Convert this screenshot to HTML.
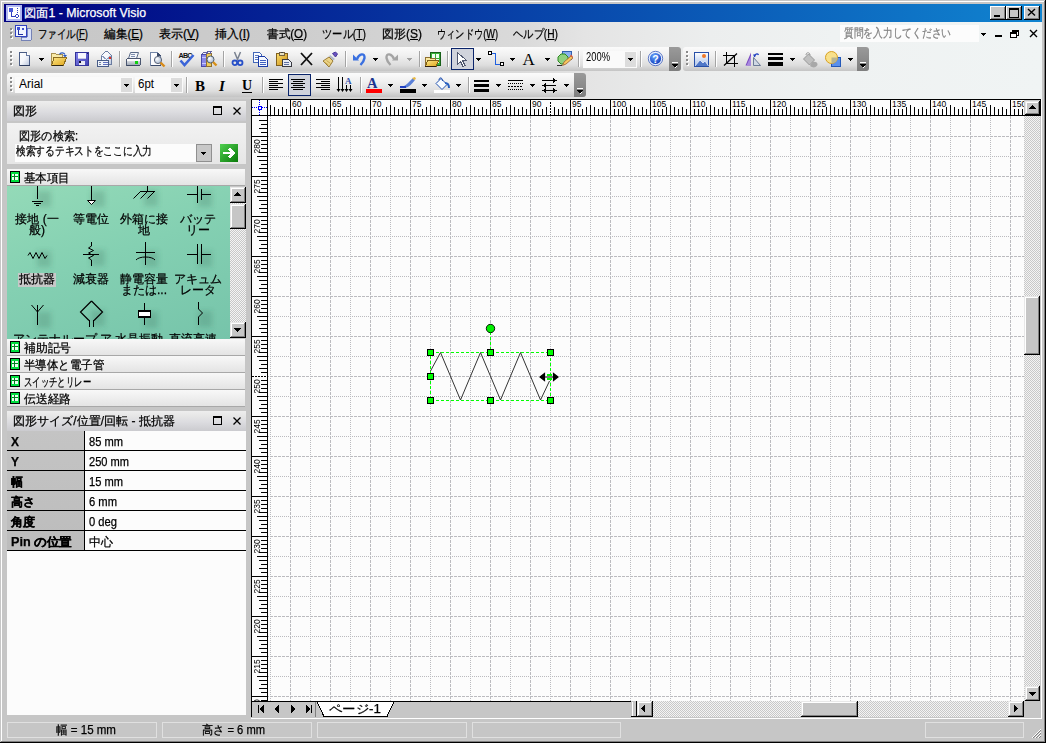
<!DOCTYPE html><html><head><meta charset="utf-8"><style>
*{margin:0;padding:0;box-sizing:border-box}
html,body{width:1046px;height:743px;overflow:hidden;background:#c6c6c6;font-family:"Liberation Sans",sans-serif;font-size:12px;color:#000}
.a{position:absolute}
.t{position:absolute;white-space:nowrap;line-height:12px;font-size:12px;transform-origin:0 0;z-index:5;-webkit-text-stroke:0.25px currentColor}
.clip{position:absolute;overflow:hidden;z-index:5}
svg{position:absolute;left:0;top:0;z-index:3}
u{text-decoration:underline}
</style></head><body>
<div class="a" style="left:1px;top:1px;width:1043px;height:1px;background:#fff"></div>
<div class="a" style="left:1px;top:1px;width:1px;height:740px;background:#fff"></div>
<div class="a" style="left:1044px;top:1px;width:1px;height:741px;background:#808080"></div>
<div class="a" style="left:1px;top:741px;width:1044px;height:1px;background:#808080"></div>
<div class="a" style="left:1045px;top:0px;width:1px;height:743px;background:#000"></div>
<div class="a" style="left:0px;top:742px;width:1046px;height:1px;background:#000"></div>
<div class="a" style="left:4px;top:4px;width:1038px;height:18px;background:linear-gradient(to right,#000080,#1084d0)"></div>
<div class="a" style="left:4px;top:22px;width:1038px;height:77px;background:linear-gradient(to right,#c6c6c6 0%,#cdcdcd 27%,#dadada 50%,#e4e4e4 56%,#eceeee 68%,#eff2f2 80%,#f0f4f4 100%)"></div>
<div class="a" style="left:7px;top:47px;width:674px;height:24px;border-radius:3px;background:linear-gradient(to bottom,#fbfbfb 0%,#f0f0f0 35%,#dedede 75%,#c4c4c4 100%)"></div>
<div class="a" style="left:669px;top:47px;width:12px;height:24px;border-radius:0 3px 3px 0;background:linear-gradient(to bottom,#9a9a9a,#7e7e7e)"></div>
<div class="a" style="left:683px;top:47px;width:186px;height:24px;border-radius:3px;background:linear-gradient(to bottom,#fbfbfb 0%,#f0f0f0 35%,#dedede 75%,#c4c4c4 100%)"></div>
<div class="a" style="left:857px;top:47px;width:12px;height:24px;border-radius:0 3px 3px 0;background:linear-gradient(to bottom,#9a9a9a,#7e7e7e)"></div>
<div class="a" style="left:7px;top:73px;width:579px;height:24px;border-radius:3px;background:linear-gradient(to bottom,#fbfbfb 0%,#f0f0f0 35%,#dedede 75%,#c4c4c4 100%)"></div>
<div class="a" style="left:574px;top:73px;width:12px;height:24px;border-radius:0 3px 3px 0;background:linear-gradient(to bottom,#9a9a9a,#7e7e7e)"></div>
<div class="t" id="t0" style="left:38px;top:28px;transform:scaleX(0.7893);">ファイル(<u>F</u>)</div>
<div class="t" id="t1" style="left:104px;top:28px;transform:scaleX(0.9746);">編集(<u>E</u>)</div>
<div class="t" id="t2" style="left:159px;top:28px;transform:scaleX(0.9996);">表示(<u>V</u>)</div>
<div class="t" id="t3" style="left:215px;top:28px;transform:scaleX(0.9903);">挿入(<u>I</u>)</div>
<div class="t" id="t4" style="left:267px;top:28px;transform:scaleX(0.9675);">書式(<u>O</u>)</div>
<div class="t" id="t5" style="left:322px;top:28px;transform:scaleX(0.8570);">ツール(<u>T</u>)</div>
<div class="t" id="t6" style="left:382px;top:28px;transform:scaleX(0.9996);">図形(<u>S</u>)</div>
<div class="t" id="t7" style="left:437px;top:28px;transform:scaleX(0.7690);">ウィンドウ(<u>W</u>)</div>
<div class="t" id="t8" style="left:513px;top:28px;transform:scaleX(0.8543);">ヘルプ(<u>H</u>)</div>
<div class="a" style="left:840px;top:25px;width:139px;height:17px;background:#fcfcfc"></div>
<div class="t" id="t9" style="left:844px;top:27px;transform:scaleX(0.8106);color:#808080">質問を入力してください</div>
<div class="a" style="left:451px;top:48px;width:23px;height:22px;background:#d0d3dc;border:1px solid #0a246a"></div>
<div class="a" style="left:583px;top:51px;width:54px;height:17px;background:#fafafa"></div>
<div class="a" style="left:625px;top:52px;width:11px;height:15px;background:#dcdcdc"></div>
<div class="t" id="t10" style="left:586px;top:51px;transform:scaleX(0.7817);-webkit-text-stroke:0">200%</div>
<div class="a" style="left:15px;top:77px;width:118px;height:16px;background:#fafafa"></div>
<div class="a" style="left:121px;top:78px;width:11px;height:14px;background:#dcdcdc"></div>
<div class="t" id="t11" style="left:19px;top:78px;transform:scaleX(0.9993);-webkit-text-stroke:0">Arial</div>
<div class="a" style="left:135px;top:77px;width:48px;height:16px;background:#fafafa"></div>
<div class="a" style="left:171px;top:78px;width:11px;height:14px;background:#dcdcdc"></div>
<div class="t" id="t12" style="left:138px;top:78px;transform:scaleX(0.9588);-webkit-text-stroke:0">6pt</div>
<div class="a" style="left:288px;top:74px;width:23px;height:22px;background:#d0d3dc;border:1px solid #0a246a"></div>
<div class="a" style="left:7px;top:101px;width:239px;height:20px;background:linear-gradient(to bottom,#eeeeee 0%,#e6e6e6 25%,#dcdce0 55%,#cbcbcf 100%)"></div>
<div class="t" id="t13" style="left:13px;top:105px;transform:scaleX(1.0000);">図形</div>
<div class="a" style="left:7px;top:123px;width:239px;height:41px;background:linear-gradient(to bottom,#f2f2f2,#e6e6e6)"></div>
<div class="t" id="t14" style="left:19px;top:130px;transform:scaleX(0.9314);">図形の検索:</div>
<div class="a" style="left:15px;top:144px;width:181px;height:18px;background:#fcfcfc"></div>
<div class="t" id="t15" style="left:16px;top:145px;transform:scaleX(0.8095);">検索するテキストをここに入力</div>
<div class="a" style="left:196px;top:144px;width:16px;height:18px;background:#c8c8c8;border:1px solid #909090"></div>
<div class="a" style="left:220px;top:144px;width:18px;height:18px;background:linear-gradient(135deg,#50d050,#0a7a0a)"></div>
<div class="a" style="left:7px;top:169px;width:238px;height:17px;background:linear-gradient(to bottom,#f8f8f8,#e4e4e4);border-bottom:1px solid #a8a8a8"></div>
<div class="t" id="t16" style="left:24px;top:172px;transform:scaleX(0.9583);">基本項目</div>
<div class="a" style="left:7px;top:186px;width:223px;height:153px;background:linear-gradient(160deg,#94dab8 0%,#84d0b2 45%,#76c4aa 100%)"></div>
<div class="a" style="left:230px;top:187px;width:16px;height:151px;background:repeating-conic-gradient(#f4f4f4 0 25%,#c8c8c8 0 50%) 0 0/2px 2px"></div>
<div class="clip" style="left:7px;top:186px;width:223px;height:153px">
<div class="t" style="left:0px;top:27px;width:60px;text-align:center">接地 (一</div>
<div class="t" style="left:0px;top:38px;width:60px;text-align:center">般)</div>
<div class="t" style="left:54px;top:27px;width:60px;text-align:center">等電位</div>
<div class="t" style="left:107px;top:27px;width:60px;text-align:center">外箱に接</div>
<div class="t" style="left:107px;top:38px;width:60px;text-align:center">地</div>
<div class="t" style="left:161px;top:27px;width:60px;text-align:center">バッテ</div>
<div class="t" style="left:161px;top:38px;width:60px;text-align:center">リー</div>
<div class="a" style="left:11px;top:87px;width:38px;height:14px;background:#c8c8c8"></div>
<div class="t" style="left:0px;top:87px;width:60px;text-align:center">抵抗器</div>
<div class="t" style="left:54px;top:87px;width:60px;text-align:center">減衰器</div>
<div class="t" style="left:107px;top:87px;width:60px;text-align:center">静電容量</div>
<div class="t" style="left:107px;top:98px;width:60px;text-align:center">または...</div>
<div class="t" style="left:161px;top:87px;width:60px;text-align:center">アキュム</div>
<div class="t" style="left:161px;top:98px;width:60px;text-align:center">レータ</div>
<div class="t" style="left:0px;top:147px;width:60px;text-align:center">アンテナ</div>
<div class="t" style="left:54px;top:147px;width:60px;text-align:center">ループ ア...</div>
<div class="t" style="left:107px;top:147px;width:60px;text-align:center">水晶振動...</div>
<div class="t" style="left:161px;top:147px;width:60px;text-align:center">直流高速...</div>
</div>
<div class="a" style="left:7px;top:339px;width:238px;height:17px;background:linear-gradient(to bottom,#f8f8f8,#e4e4e4);border-bottom:1px solid #a8a8a8"></div>
<div class="t" id="t17" style="left:24px;top:342px;transform:scaleX(0.9792);">補助記号</div>
<div class="a" style="left:7px;top:356px;width:238px;height:17px;background:linear-gradient(to bottom,#f8f8f8,#e4e4e4);border-bottom:1px solid #a8a8a8"></div>
<div class="t" id="t18" style="left:24px;top:359px;transform:scaleX(0.9524);">半導体と電子管</div>
<div class="a" style="left:7px;top:373px;width:238px;height:17px;background:linear-gradient(to bottom,#f8f8f8,#e4e4e4);border-bottom:1px solid #a8a8a8"></div>
<div class="t" id="t19" style="left:24px;top:376px;transform:scaleX(0.6979);">スイッチとリレー</div>
<div class="a" style="left:7px;top:390px;width:238px;height:17px;background:linear-gradient(to bottom,#f8f8f8,#e4e4e4);border-bottom:1px solid #a8a8a8"></div>
<div class="t" id="t20" style="left:24px;top:393px;transform:scaleX(0.9792);">伝送経路</div>
<div class="a" style="left:7px;top:411px;width:239px;height:20px;background:linear-gradient(to bottom,#eeeeee 0%,#e6e6e6 25%,#dcdce0 55%,#cbcbcf 100%)"></div>
<div class="t" id="t21" style="left:13px;top:415px;transform:scaleX(1.0041);">図形サイズ/位置/回転 - 抵抗器</div>
<div class="a" style="left:7px;top:431px;width:239px;height:284px;background:#fcfcfc"></div>
<div class="a" style="left:7px;top:431px;width:77px;height:120px;background:linear-gradient(to bottom,#c4c4c4,#bcbcbc)"></div>
<div class="a" style="left:7px;top:450px;width:239px;height:1px;background:#000"></div>
<div class="a" style="left:7px;top:470px;width:239px;height:1px;background:#000"></div>
<div class="a" style="left:7px;top:490px;width:239px;height:1px;background:#000"></div>
<div class="a" style="left:7px;top:510px;width:239px;height:1px;background:#000"></div>
<div class="a" style="left:7px;top:530px;width:239px;height:1px;background:#000"></div>
<div class="a" style="left:7px;top:550px;width:239px;height:1px;background:#000"></div>
<div class="a" style="left:84px;top:431px;width:1px;height:120px;background:#000"></div>
<div class="t" id="t22" style="left:11px;top:436px;transform:scaleX(0.9981);font-weight:bold">X</div>
<div class="t" id="t23" style="left:89px;top:436px;transform:scaleX(0.9267);">85 mm</div>
<div class="t" id="t24" style="left:11px;top:456px;transform:scaleX(0.9981);font-weight:bold">Y</div>
<div class="t" id="t25" style="left:89px;top:456px;transform:scaleX(0.9225);">250 mm</div>
<div class="t" id="t26" style="left:11px;top:476px;transform:scaleX(1.0000);font-weight:bold">幅</div>
<div class="t" id="t27" style="left:89px;top:476px;transform:scaleX(0.9267);">15 mm</div>
<div class="t" id="t28" style="left:11px;top:496px;transform:scaleX(1.0000);font-weight:bold">高さ</div>
<div class="t" id="t29" style="left:89px;top:496px;transform:scaleX(0.9333);">6 mm</div>
<div class="t" id="t30" style="left:11px;top:516px;transform:scaleX(1.0000);font-weight:bold">角度</div>
<div class="t" id="t31" style="left:89px;top:516px;transform:scaleX(0.9324);">0 deg</div>
<div class="t" id="t32" style="left:11px;top:536px;transform:scaleX(1.0514);font-weight:bold">Pin の位置</div>
<div class="t" id="t33" style="left:89px;top:536px;transform:scaleX(1.0000);">中心</div>
<div class="a" style="left:268px;top:116px;width:756px;height:585px;background:#fcfcfc"></div>
<div class="a" style="left:1024px;top:116px;width:16px;height:585px;background:repeating-conic-gradient(#f4f4f4 0 25%,#c8c8c8 0 50%) 0 0/2px 2px"></div>
<div class="a" style="left:251px;top:702px;width:790px;height:16px;background:#c6c6c6"></div>
<div class="a" style="left:251px;top:718px;width:791px;height:1px;background:#fff"></div>
<div class="a" style="left:1041px;top:99px;width:1px;height:620px;background:#fff"></div>
<div class="a" style="left:653px;top:701px;width:371px;height:16px;background:repeating-conic-gradient(#f4f4f4 0 25%,#c8c8c8 0 50%) 0 0/2px 2px"></div>
<div class="t" id="t34" style="left:329px;top:703px;transform:scaleX(1.1142);">ページ-1</div>
<div class="a" style="left:7px;top:722px;width:150px;height:16px;border:1px solid #e0e0e0"></div>
<div class="a" style="left:162px;top:722px;width:150px;height:16px;border:1px solid #e0e0e0"></div>
<div class="a" style="left:317px;top:722px;width:150px;height:16px;border:1px solid #e0e0e0"></div>
<div class="a" style="left:472px;top:722px;width:149px;height:16px;border:1px solid #e0e0e0"></div>
<div class="a" style="left:925px;top:722px;width:99px;height:16px;border:1px solid #e0e0e0"></div>
<div class="t" id="t35" style="left:56px;top:724px;transform:scaleX(0.9622);">幅 = 15 mm</div>
<div class="t" id="t36" style="left:202px;top:724px;transform:scaleX(0.9307);">高さ = 6 mm</div>
<svg width="1046" height="743" viewBox="0 0 1046 743" shape-rendering="crispEdges"><defs>
<linearGradient id="gPage" x1="0" y1="0" x2="1" y2="1"><stop offset="0" stop-color="#ffffff"/><stop offset=".5" stop-color="#f4f6fb"/><stop offset="1" stop-color="#b8c4dc"/></linearGradient>
<linearGradient id="gFold" x1="0" y1="0" x2="0" y2="1"><stop offset="0" stop-color="#fbe9a0"/><stop offset="1" stop-color="#e8b838"/></linearGradient>
<linearGradient id="gFoldF" x1="0" y1="0" x2="1" y2="1"><stop offset="0" stop-color="#fce88a"/><stop offset="1" stop-color="#e0a418"/></linearGradient>
<linearGradient id="gSave" x1="0" y1="0" x2="1" y2="1"><stop offset="0" stop-color="#8888ee"/><stop offset="1" stop-color="#3c3cb0"/></linearGradient>
<linearGradient id="gBlue" x1="0" y1="0" x2="1" y2="1"><stop offset="0" stop-color="#6aa0f8"/><stop offset="1" stop-color="#1840b8"/></linearGradient>
<linearGradient id="gGrey" x1="0" y1="0" x2="0" y2="1"><stop offset="0" stop-color="#fafafa"/><stop offset="1" stop-color="#9aa4b4"/></linearGradient>
<radialGradient id="gGlass" cx=".35" cy=".35" r=".7"><stop offset="0" stop-color="#ffffff"/><stop offset="1" stop-color="#a8b8d0"/></radialGradient>
<radialGradient id="gHelp" cx=".4" cy=".3" r=".8"><stop offset="0" stop-color="#6aa8ff"/><stop offset="1" stop-color="#0834b8"/></radialGradient>
<linearGradient id="gGreenBtn" x1="0" y1="0" x2="1" y2="1"><stop offset="0" stop-color="#50d050"/><stop offset="1" stop-color="#0a7a0a"/></linearGradient>
<linearGradient id="gPaste" x1="0" y1="0" x2="1" y2="1"><stop offset="0" stop-color="#fce070"/><stop offset="1" stop-color="#c88a10"/></linearGradient>
<linearGradient id="gPic" x1="0" y1="0" x2="0" y2="1"><stop offset="0" stop-color="#ffffff"/><stop offset="1" stop-color="#a8c0e8"/></linearGradient>
</defs><rect x="672" y="62" width="6" height="1" fill="#fff"/><path d="M672 64h6v1h-1v1h-1v1h-2v-1h-1v-1h-1z" fill="#000"/><path d="M676 66h1v1h-1v1h-1v-1h1z" fill="#fff"/><rect x="860" y="62" width="6" height="1" fill="#fff"/><path d="M860 64h6v1h-1v1h-1v1h-2v-1h-1v-1h-1z" fill="#000"/><path d="M864 66h1v1h-1v1h-1v-1h1z" fill="#fff"/><rect x="577" y="88" width="6" height="1" fill="#fff"/><path d="M577 90h6v1h-1v1h-1v1h-2v-1h-1v-1h-1z" fill="#000"/><path d="M581 92h1v1h-1v1h-1v-1h1z" fill="#fff"/><rect x="11" y="29" width="2" height="2" fill="#fff"/><rect x="10" y="28" width="2" height="2" fill="#8a8a8a"/><rect x="11" y="33" width="2" height="2" fill="#fff"/><rect x="10" y="32" width="2" height="2" fill="#8a8a8a"/><rect x="11" y="37" width="2" height="2" fill="#fff"/><rect x="10" y="36" width="2" height="2" fill="#8a8a8a"/><g transform="translate(15,25)"><rect x="0.5" y="0.5" width="11" height="11" fill="#f0f4ff" stroke="#3040c0"/><rect x="2" y="2" width="3" height="3" fill="#4050d0"/><rect x="7" y="3" width="2" height="2" fill="#4050d0"/><path d="M3.5 5v4h4" stroke="#2030a0" fill="none"/><path d="M12 3h3l1 1v11h-10v-3h6z" fill="#d8e0f8" stroke="#6070b0" stroke-width=".8"/></g><path d="M981 33h5v1h-1v1h-1v1h-1v-1h-1v-1h-1z" fill="#000"/><rect x="995" y="35" width="7" height="2" fill="#000"/><path d="M1012.5 30.5h6v5h-2M1010.5 32.5h6v5h-6z" fill="#fff" stroke="#000"/><rect x="1012" y="30" width="7" height="2" fill="#000"/><rect x="1010" y="32" width="7" height="2" fill="#000"/><path d="M1030 30l7 7M1037 30l-7 7" stroke="#000" stroke-width="1.4" shape-rendering="auto"/><rect x="11" y="52" width="2" height="2" fill="#fff"/><rect x="10" y="51" width="2" height="2" fill="#8a8a8a"/><rect x="11" y="56" width="2" height="2" fill="#fff"/><rect x="10" y="55" width="2" height="2" fill="#8a8a8a"/><rect x="11" y="60" width="2" height="2" fill="#fff"/><rect x="10" y="59" width="2" height="2" fill="#8a8a8a"/><rect x="11" y="64" width="2" height="2" fill="#fff"/><rect x="10" y="63" width="2" height="2" fill="#8a8a8a"/><g transform="translate(19,52)"><path d="M0.5 0.5h7l3 3v10h-10z" fill="url(#gPage)" stroke="#4a5c84"/><path d="M1 13.5h10" stroke="#2c3c60"/><path d="M7.5 0.5v3h3" fill="#fff" stroke="#6a7ca4"/></g><path d="M39 58h5v1h-1v1h-1v1h-1v-1h-1v-1h-1z" fill="#000"/><g transform="translate(51,52)"><path d="M0.5 1.5h4l1 1h6v10h-11z" fill="#f8eaa8" stroke="#a89050"/><path d="M3 5.5h12.5l-3 8h-12z" fill="url(#gFoldF)" stroke="#8c6c20"/><path d="M1 13.5h11" stroke="#302810"/><path d="M8.5 2.5c1-2 4-2.5 5.5 0" fill="none" stroke="#2858c0" stroke-width="1.3" shape-rendering="auto"/><path d="M12 3h4l-2 2.5z" fill="#2858c0" shape-rendering="auto"/></g><g transform="translate(75,52)"><rect x="0" y="0" width="14" height="14" fill="url(#gSave)"/><rect x="0.5" y="0.5" width="13" height="13" fill="none" stroke="#32329a"/><rect x="3" y="1" width="8" height="6" fill="#f8f8ff"/><rect x="3" y="6" width="8" height="1" fill="#c8c8e8"/><rect x="4" y="9" width="6" height="4" fill="#e8e8f4"/><rect x="4" y="9" width="2" height="2" fill="#101030"/><rect x="12" y="1" width="1" height="1" fill="#202060"/></g><g transform="translate(97,51)"><path d="M4.5 4.5l4-4h2l4 4v9h-10z" fill="url(#gPage)" stroke="#6a7ca0"/><path d="M4.5 4.5l5 4l5-4" fill="none" stroke="#8a9cc0"/><rect x="12" y="6" width="2" height="2" fill="#e03020"/><rect x="0.5" y="9.5" width="11" height="6" fill="#f0f4fa" stroke="#485c88"/><rect x="6" y="11" width="5" height="1" fill="#6070c0"/><rect x="6" y="13" width="5" height="1" fill="#6070c0"/><rect x="2" y="11" width="2" height="1" fill="#7080a0"/><rect x="2" y="13" width="2" height="1" fill="#7080a0"/></g><rect x="119" y="51" width="1" height="16" fill="#a4a4a4"/><rect x="120" y="51" width="1" height="16" fill="#fff"/><g transform="translate(126,52)"><path d="M4.5 0.5h8l-2 6h-8z" fill="#f4f6fa" stroke="#5a6a88" shape-rendering="auto"/><path d="M5 2.5h4M4.5 4h4" stroke="#8090b0"/><rect x="0.5" y="6.5" width="14" height="7" rx="1.5" fill="url(#gGrey)" stroke="#4a5670"/><rect x="1" y="7" width="13" height="2" fill="#fcfcfc"/><rect x="9" y="9" width="3" height="3" fill="#10d010"/><rect x="1" y="13" width="13" height="1" fill="#3a4660"/></g><g transform="translate(150,52)"><path d="M0.5 0.5h7l3 3v10h-10z" fill="#fcfcfe" stroke="#7486a8"/><path d="M1 13.5h10" stroke="#3a4a6a"/><path d="M7.5 0.5v3h3" fill="#3a4a6a" stroke="#3a4a6a"/><circle cx="8" cy="8" r="3.6" fill="url(#gGlass)" stroke="#5a6478" shape-rendering="auto"/><path d="M10.5 10.5l4 4" stroke="#d88a18" stroke-width="2.4" shape-rendering="auto"/></g><rect x="171" y="51" width="1" height="16" fill="#a4a4a4"/><rect x="172" y="51" width="1" height="16" fill="#fff"/><g transform="translate(178,51)"><text x="0.5" y="6.5" font-family="Liberation Sans" font-size="7.2" font-weight="bold" fill="#101010" textLength="14">ABC</text><path d="M2.5 9.5l4 4.5l9-10" fill="none" stroke="#3a64d8" stroke-width="2.6" shape-rendering="auto"/></g><g transform="translate(201,51)"><rect x="0.5" y="3.5" width="5" height="12" fill="#8888e8" stroke="#4848a8"/><path d="M1 6h4M1 12h4" stroke="#c8c8ff"/><rect x="5.5" y="2.5" width="5" height="13" fill="#f0cc58" stroke="#907030"/><path d="M1 3l2-2h3l-1 2M6 2.5l1-2h3l-1 2" fill="none" stroke="#6060a0"/><circle cx="9.5" cy="8.5" r="3.5" fill="url(#gGlass)" stroke="#506070" shape-rendering="auto"/><path d="M12 11l3.5 3.5" stroke="#d89018" stroke-width="2.4" shape-rendering="auto"/></g><rect x="223" y="51" width="1" height="16" fill="#a4a4a4"/><rect x="224" y="51" width="1" height="16" fill="#fff"/><g transform="translate(232,52)"><path d="M2.5 0l3.5 8.5M8.5 0l-3.5 8.5" stroke="#7a8290" stroke-width="1.5" fill="none" shape-rendering="auto"/><circle cx="2.8" cy="10.8" r="2.3" fill="none" stroke="#2850c8" stroke-width="1.8" shape-rendering="auto"/><circle cx="8.2" cy="10.8" r="2.3" fill="none" stroke="#2850c8" stroke-width="1.8" shape-rendering="auto"/></g><g transform="translate(253,52)"><path d="M0.5 0.5h6l2 2v8h-8z" fill="#fafcff" stroke="#4468b8"/><rect x="2" y="3" width="4" height="1" fill="#5a78c0"/><rect x="2" y="5" width="4" height="1" fill="#5a78c0"/><rect x="2" y="7" width="3" height="1" fill="#5a78c0"/><path d="M5.5 4.5h6l3 3v7h-9z" fill="#f4f8ff" stroke="#1c3ca8"/><rect x="7" y="8" width="6" height="1" fill="#4060c0"/><rect x="7" y="10" width="6" height="1" fill="#4060c0"/><rect x="7" y="12" width="6" height="1" fill="#4060c0"/></g><g transform="translate(276,52)"><rect x="0.5" y="1.5" width="11" height="12" fill="url(#gPaste)" stroke="#806020"/><rect x="3.5" y="0.5" width="5" height="3" fill="#e8e0c0" stroke="#706040"/><rect x="5" y="0" width="2" height="1" fill="#404040"/><path d="M6.5 7.5h6l3 3v4h-9z" fill="#e8ecf4" stroke="#3a3a40"/><rect x="8" y="10" width="5" height="1" fill="#6070a0"/><rect x="8" y="12" width="5" height="1" fill="#6070a0"/></g><g transform="translate(300,52)"><path d="M1 1l11 12M12 1l-11 12" stroke="#101010" stroke-width="1.8" shape-rendering="auto"/></g><g transform="translate(322,52)"><path d="M10.5 1.5l3-1.5l2 2l-2 3z" fill="#6a52c0" stroke="#48389a" shape-rendering="auto"/><path d="M8 3l5 4l-2 1.5l-4-3.5z" fill="#b0b8c8" shape-rendering="auto"/><path d="M1 9l6-4l4 4l-4 6z" fill="#ecd488" stroke="#9a7c38" shape-rendering="auto"/><path d="M2.5 10l4 3M4.5 8.5l4 3" stroke="#c8a850" shape-rendering="auto"/></g><rect x="345" y="51" width="1" height="16" fill="#a4a4a4"/><rect x="346" y="51" width="1" height="16" fill="#fff"/><g transform="translate(353,52)"><path d="M4 7C6 1.5 12 0.5 11.5 6C11 9 9.5 11 7.5 13" fill="none" stroke="#3a70e0" stroke-width="2.4" shape-rendering="auto"/><path d="M0 2.5v6h6z" fill="#3a70e0" shape-rendering="auto"/></g><path d="M373 58h5v1h-1v1h-1v1h-1v-1h-1v-1h-1z" fill="#000"/><g transform="translate(386,52)"><path d="M8 7C6 1.5 0 0.5 0.5 6C1 9 2.5 11 4.5 13" fill="none" stroke="#a4a4a4" stroke-width="2.4" shape-rendering="auto"/><path d="M12 2.5v6h-6z" fill="#a4a4a4" shape-rendering="auto"/></g><path d="M407 58h5v1h-1v1h-1v1h-1v-1h-1v-1h-1z" fill="#a0a0a0"/><rect x="419" y="51" width="1" height="16" fill="#a4a4a4"/><rect x="420" y="51" width="1" height="16" fill="#fff"/><g transform="translate(425,52)"><rect x="5.5" y="0.5" width="10" height="13" fill="#38b038" stroke="#186018"/><rect x="7" y="2" width="3" height="4" fill="#f0fff0"/><rect x="11" y="2" width="3" height="4" fill="#f0fff0"/><rect x="11" y="7" width="3" height="4" fill="#f0fff0"/><path d="M0.5 5.5h4l1 1h5v8h-10z" fill="#f8e8a0" stroke="#907030"/><path d="M2.5 8.5h11l-2.5 6h-10.5z" fill="url(#gFoldF)" stroke="#806018"/><path d="M0 14.5h11" stroke="#302010"/></g><rect x="447" y="51" width="1" height="16" fill="#a4a4a4"/><rect x="448" y="51" width="1" height="16" fill="#fff"/><g transform="translate(456,52)"><path d="M1.5 0.5v12l3-3l2.5 5l2-1l-2.5-5h4z" fill="#fff" stroke="#505870"/></g><path d="M476 58h5v1h-1v1h-1v1h-1v-1h-1v-1h-1z" fill="#000"/><g transform="translate(488,51)"><path d="M3 2h4v11h5" fill="none" stroke="#2060e0" stroke-width="1"/><rect x="0.5" y="0.5" width="3" height="3" fill="#fff" stroke="#000"/><rect x="12.5" y="11.5" width="3" height="3" fill="#fff" stroke="#000"/></g><path d="M510 58h5v1h-1v1h-1v1h-1v-1h-1v-1h-1z" fill="#000"/><g transform="translate(523,52)"><text x="-0.5" y="13" font-family="Liberation Serif" font-size="17" fill="#000">A</text></g><path d="M545 58h5v1h-1v1h-1v1h-1v-1h-1v-1h-1z" fill="#000"/><g transform="translate(557,51)"><rect x="5.5" y="0.5" width="9" height="8" fill="#88b0f0" stroke="#3060b0"/><path d="M4 3l4 0l3 3l0 4l-3 3l-4 0l-3-3l0-4z" fill="#90d080" stroke="#2a8a20" shape-rendering="auto"/><path d="M5.5 14.5l1.5-3.5l7-6l2 2l-7 6z" fill="#f8c860" stroke="#a06030" stroke-width=".8" shape-rendering="auto"/><path d="M13 4.5l2 2l1-1l-2-2z" fill="#e06040" shape-rendering="auto"/><rect x="0" y="14" width="5" height="1" fill="#303030"/></g><rect x="578" y="51" width="1" height="16" fill="#a4a4a4"/><rect x="579" y="51" width="1" height="16" fill="#fff"/><path d="M628 58h5v1h-1v1h-1v1h-1v-1h-1v-1h-1z" fill="#000"/><rect x="640" y="51" width="1" height="16" fill="#a4a4a4"/><rect x="641" y="51" width="1" height="16" fill="#fff"/><g transform="translate(648,51)"><circle cx="7.5" cy="7.5" r="7.2" fill="#e8f0ff" stroke="#3a5ab8" stroke-width=".8" shape-rendering="auto"/><circle cx="7.5" cy="7.5" r="5.6" fill="url(#gHelp)" shape-rendering="auto"/><text x="4.3" y="11.6" font-family="Liberation Sans" font-weight="bold" font-size="10.5" fill="#fff">?</text></g><rect x="687" y="52" width="2" height="2" fill="#fff"/><rect x="686" y="51" width="2" height="2" fill="#8a8a8a"/><rect x="687" y="56" width="2" height="2" fill="#fff"/><rect x="686" y="55" width="2" height="2" fill="#8a8a8a"/><rect x="687" y="60" width="2" height="2" fill="#fff"/><rect x="686" y="59" width="2" height="2" fill="#8a8a8a"/><rect x="687" y="64" width="2" height="2" fill="#fff"/><rect x="686" y="63" width="2" height="2" fill="#8a8a8a"/><g transform="translate(694,52)"><rect x="0.5" y="0.5" width="14" height="14" fill="url(#gPic)" stroke="#2850a8"/><path d="M1 14l5-6l3 3l2-2l3.5 5z" fill="#5078c8" shape-rendering="auto"/><path d="M1 14l5-6l3 3l2-2l3.5 5" fill="none" stroke="#f8f8ff" stroke-width=".7" shape-rendering="auto"/><circle cx="10" cy="4" r="2" fill="#f07828" shape-rendering="auto"/></g><rect x="715" y="51" width="1" height="16" fill="#a4a4a4"/><rect x="716" y="51" width="1" height="16" fill="#fff"/><g transform="translate(723,52)"><path d="M3.5 0v11.5h11.5M0 3.5h11.5v11.5" fill="none" stroke="#000" stroke-width="1.6"/><path d="M1 13.5l13-12" stroke="#000" stroke-width="1.2" shape-rendering="auto"/></g><g transform="translate(745,51)"><path d="M6 1.5l-5.5 13h5.5z" fill="#7a48c0" shape-rendering="auto"/><path d="M1.5 14.5l4.5-10v10z" fill="#a888e0" shape-rendering="auto"/><path d="M8.5 6.5v8h7z" fill="#d0d8e4" stroke="#607090" stroke-width=".9" shape-rendering="auto"/><path d="M9.5 6c0-3 3-4 4-2" fill="none" stroke="#2040c0" stroke-width="1.3" shape-rendering="auto"/><path d="M8 3.5h3l-1.5 3z" fill="#2040c0" shape-rendering="auto"/></g><g transform="translate(768,51)"><rect x="0" y="2" width="15" height="2" fill="#000"/><rect x="0" y="6" width="15" height="3" fill="#000"/><rect x="0" y="11" width="15" height="4" fill="#000"/></g><path d="M790 58h5v1h-1v1h-1v1h-1v-1h-1v-1h-1z" fill="#000"/><g transform="translate(802,52)"><path d="M1.5 7l5-5l6 6l-5 5z" fill="#c0c0c0" stroke="#989898" shape-rendering="auto"/><path d="M4 3c0-3 4-3 4 0" fill="none" stroke="#989898" shape-rendering="auto"/><path d="M10 10c3-1 6 0 5.5 3c-1.5 3-5 3-7.5 1z" fill="#a8a8a8" shape-rendering="auto"/></g><g transform="translate(825,51)"><rect x="6.5" y="6.5" width="9" height="9" fill="#5a90ec" stroke="#2458b8"/><circle cx="6.5" cy="6.5" r="6" fill="#f8e08a" stroke="#d8a020" shape-rendering="auto"/><path d="M6.5 6.5h6a6 6 0 0 1-6 6z" fill="#b8b490" shape-rendering="auto"/></g><path d="M848 58h5v1h-1v1h-1v1h-1v-1h-1v-1h-1z" fill="#000"/><rect x="11" y="78" width="2" height="2" fill="#fff"/><rect x="10" y="77" width="2" height="2" fill="#8a8a8a"/><rect x="11" y="82" width="2" height="2" fill="#fff"/><rect x="10" y="81" width="2" height="2" fill="#8a8a8a"/><rect x="11" y="86" width="2" height="2" fill="#fff"/><rect x="10" y="85" width="2" height="2" fill="#8a8a8a"/><rect x="11" y="90" width="2" height="2" fill="#fff"/><rect x="10" y="89" width="2" height="2" fill="#8a8a8a"/><path d="M124 84h5v1h-1v1h-1v1h-1v-1h-1v-1h-1z" fill="#000"/><path d="M174 84h5v1h-1v1h-1v1h-1v-1h-1v-1h-1z" fill="#000"/><rect x="186" y="77" width="1" height="16" fill="#a4a4a4"/><rect x="187" y="77" width="1" height="16" fill="#fff"/><g transform="translate(195,78)"><text x="0" y="13" font-family="Liberation Serif" font-weight="bold" font-size="15" fill="#000">B</text></g><g transform="translate(219,78)"><text x="0" y="13" font-family="Liberation Serif" font-style="italic" font-weight="bold" font-size="15" fill="#000">I</text></g><g transform="translate(242,78)"><text x="0" y="12" font-family="Liberation Serif" font-weight="bold" font-size="14" fill="#000">U</text><rect x="0" y="14" width="10" height="1" fill="#000"/></g><rect x="262" y="77" width="1" height="16" fill="#a4a4a4"/><rect x="263" y="77" width="1" height="16" fill="#fff"/><g transform="translate(269,78)"><rect x="0" y="1" width="14" height="1" fill="#000"/><rect x="0" y="3" width="9" height="1" fill="#000"/><rect x="0" y="5" width="14" height="1" fill="#000"/><rect x="0" y="7" width="9" height="1" fill="#000"/><rect x="0" y="9" width="14" height="1" fill="#000"/><rect x="0" y="11" width="9" height="1" fill="#000"/></g><g transform="translate(291,78)"><rect x="0" y="1" width="14" height="1" fill="#000"/><rect x="2" y="3" width="10" height="1" fill="#000"/><rect x="0" y="5" width="14" height="1" fill="#000"/><rect x="2" y="7" width="10" height="1" fill="#000"/><rect x="0" y="9" width="14" height="1" fill="#000"/><rect x="2" y="11" width="10" height="1" fill="#000"/></g><g transform="translate(315,78)"><rect x="1" y="1" width="14" height="1" fill="#000"/><rect x="6" y="3" width="9" height="1" fill="#000"/><rect x="1" y="5" width="14" height="1" fill="#000"/><rect x="6" y="7" width="9" height="1" fill="#000"/><rect x="1" y="9" width="14" height="1" fill="#000"/><rect x="6" y="11" width="9" height="1" fill="#000"/></g><g transform="translate(337,77)"><path d="M1.5 0v13M5.5 0v13M9.5 8v5M13.5 8v5" stroke="#000"/><path d="M-0.5 12h4l-2 3zM3.5 12h4l-2 3zM7.5 12h4l-2 3zM11.5 12h4l-2 3z" fill="#000" shape-rendering="auto"/><text x="8" y="6.5" font-family="Liberation Serif" font-weight="bold" font-size="9" fill="#3050a8">A</text></g><rect x="360" y="77" width="1" height="16" fill="#a4a4a4"/><rect x="361" y="77" width="1" height="16" fill="#fff"/><g transform="translate(366,77)"><text x="1" y="10.5" font-family="Liberation Serif" font-weight="bold" font-size="14.5" fill="#1c3490">A</text><rect x="0" y="12" width="16" height="4" fill="#ff0000"/></g><path d="M388 84h5v1h-1v1h-1v1h-1v-1h-1v-1h-1z" fill="#000"/><g transform="translate(400,77)"><path d="M4 9c2-1 5-4 9-8l2 2c-3 4-6 7-10 8z" fill="#5a80d8" shape-rendering="auto"/><path d="M12 1l3-1l1 2l-2 1z" fill="#e8b840" shape-rendering="auto"/><path d="M0 10h6" stroke="#2040c0" stroke-width="1.5"/><rect x="0" y="12" width="16" height="4" fill="#000"/></g><path d="M422 84h5v1h-1v1h-1v1h-1v-1h-1v-1h-1z" fill="#000"/><g transform="translate(434,77)"><path d="M2 6.5l5-5l6 6l-5 5z" fill="#f8fcff" stroke="#2050b0" shape-rendering="auto"/><path d="M5 3c0-3 3.5-3 3.5 1" fill="none" stroke="#2050b0" shape-rendering="auto"/><path d="M11 6c3 0 4 2 4 5" fill="none" stroke="#2860c0" stroke-width="2" shape-rendering="auto"/><rect x="0" y="13" width="16" height="3" fill="#fff"/></g><path d="M456 84h5v1h-1v1h-1v1h-1v-1h-1v-1h-1z" fill="#000"/><rect x="468" y="77" width="1" height="16" fill="#a4a4a4"/><rect x="469" y="77" width="1" height="16" fill="#fff"/><g transform="translate(474,79)"><rect x="0" y="1" width="15" height="2" fill="#000"/><rect x="0" y="5" width="15" height="3" fill="#000"/><rect x="0" y="10" width="15" height="3" fill="#000"/></g><path d="M496 84h5v1h-1v1h-1v1h-1v-1h-1v-1h-1z" fill="#000"/><g transform="translate(508,79)"><rect x="0" y="1" width="15" height="1" fill="#000"/><rect x="0" y="4" width="1" height="1" fill="#000"/><rect x="2" y="4" width="1" height="1" fill="#000"/><rect x="4" y="4" width="1" height="1" fill="#000"/><rect x="6" y="4" width="1" height="1" fill="#000"/><rect x="8" y="4" width="1" height="1" fill="#000"/><rect x="10" y="4" width="1" height="1" fill="#000"/><rect x="12" y="4" width="1" height="1" fill="#000"/><rect x="14" y="4" width="1" height="1" fill="#000"/><rect x="0" y="7" width="2" height="1" fill="#000"/><rect x="3" y="7" width="2" height="1" fill="#000"/><rect x="6" y="7" width="2" height="1" fill="#000"/><rect x="9" y="7" width="2" height="1" fill="#000"/><rect x="12" y="7" width="2" height="1" fill="#000"/><rect x="0" y="10" width="1" height="1" fill="#000"/><rect x="2" y="10" width="1" height="1" fill="#000"/><rect x="4" y="10" width="1" height="1" fill="#000"/><rect x="6" y="10" width="1" height="1" fill="#000"/><rect x="8" y="10" width="1" height="1" fill="#000"/><rect x="10" y="10" width="1" height="1" fill="#000"/><rect x="12" y="10" width="1" height="1" fill="#000"/><rect x="14" y="10" width="1" height="1" fill="#000"/></g><path d="M530 84h5v1h-1v1h-1v1h-1v-1h-1v-1h-1z" fill="#000"/><g transform="translate(542,78)"><path d="M0 2.5h14M0 7.5h14M0 12.5h14" stroke="#000"/><path d="M15 2.5l-4-2.5v5z" fill="#000"/><path d="M0 7.5l4-2.5v5z" fill="#000"/><path d="M0 12.5l4-2.5v5zM15 12.5l-4-2.5v5z" fill="#000"/></g><path d="M564 84h5v1h-1v1h-1v1h-1v-1h-1v-1h-1z" fill="#000"/><rect x="213.5" y="106.5" width="8" height="8" fill="none" stroke="#000"/><rect x="213" y="106" width="9" height="2" fill="#000"/><path d="M233.5 107.5l7 7M240.5 107.5l-7 7" stroke="#000" stroke-width="1.3" shape-rendering="auto"/><path d="M201 152h5v1h-1v1h-1v1h-1v-1h-1v-1h-1z" fill="#000"/><path d="M223 153h10M229 148.5l4.5 4.5l-4.5 4.5" fill="none" stroke="#fff" stroke-width="2.2"/><rect x="10" y="171" width="10" height="12" fill="#000"/><rect x="11" y="172" width="8" height="10" fill="#00e040"/><rect x="12" y="174" width="6" height="6" fill="#e8fff0"/><rect x="14" y="174" width="1" height="6" fill="#008020"/><rect x="12" y="176" width="6" height="1" fill="#008020"/><rect x="230" y="187" width="16" height="16" fill="#c6c6c6"/><rect x="230" y="187" width="15" height="1" fill="#e8e8e8"/><rect x="230" y="187" width="1" height="15" fill="#e8e8e8"/><rect x="231" y="188" width="13" height="1" fill="#fff"/><rect x="231" y="188" width="1" height="13" fill="#fff"/><rect x="230" y="202" width="16" height="1" fill="#000"/><rect x="245" y="187" width="1" height="16" fill="#000"/><rect x="231" y="201" width="14" height="1" fill="#808080"/><rect x="244" y="188" width="1" height="14" fill="#808080"/><path d="M237 192h1v1h1v1h1v1h1v1h-7v-1h1v-1h1v-1h1z" fill="#000"/><rect x="230" y="204" width="16" height="25" fill="#c6c6c6"/><rect x="230" y="204" width="15" height="1" fill="#e8e8e8"/><rect x="230" y="204" width="1" height="24" fill="#e8e8e8"/><rect x="231" y="205" width="13" height="1" fill="#fff"/><rect x="231" y="205" width="1" height="22" fill="#fff"/><rect x="230" y="228" width="16" height="1" fill="#000"/><rect x="245" y="204" width="1" height="25" fill="#000"/><rect x="231" y="227" width="14" height="1" fill="#808080"/><rect x="244" y="205" width="1" height="23" fill="#808080"/><rect x="230" y="322" width="16" height="16" fill="#c6c6c6"/><rect x="230" y="322" width="15" height="1" fill="#e8e8e8"/><rect x="230" y="322" width="1" height="15" fill="#e8e8e8"/><rect x="231" y="323" width="13" height="1" fill="#fff"/><rect x="231" y="323" width="1" height="13" fill="#fff"/><rect x="230" y="337" width="16" height="1" fill="#000"/><rect x="245" y="322" width="1" height="16" fill="#000"/><rect x="231" y="336" width="14" height="1" fill="#808080"/><rect x="244" y="323" width="1" height="14" fill="#808080"/><path d="M234 328h7v1h-1v1h-1v1h-1v1h-1v-1h-1v-1h-1v-1h-1z" fill="#000"/><defs><filter id="blr" x="-50%" y="-50%" width="200%" height="200%"><feGaussianBlur stdDeviation="2.5"/></filter><clipPath id="stc"><rect x="7" y="186" width="223" height="152"/></clipPath></defs><g filter="url(#blr)" clip-path="url(#stc)"><rect x="37" y="191" width="14" height="16" fill="#306858" opacity=".22"/><rect x="91" y="191" width="14" height="16" fill="#306858" opacity=".22"/><rect x="144" y="190" width="14" height="16" fill="#306858" opacity=".22"/><rect x="198" y="191" width="14" height="16" fill="#306858" opacity=".22"/><rect x="37" y="251" width="14" height="16" fill="#306858" opacity=".22"/><rect x="91" y="250" width="14" height="16" fill="#306858" opacity=".22"/><rect x="144" y="251" width="14" height="16" fill="#306858" opacity=".22"/><rect x="198" y="251" width="14" height="16" fill="#306858" opacity=".22"/><rect x="37" y="312" width="14" height="16" fill="#306858" opacity=".22"/><rect x="91" y="310" width="14" height="16" fill="#306858" opacity=".22"/><rect x="144" y="312" width="14" height="16" fill="#306858" opacity=".22"/><rect x="198" y="311" width="14" height="16" fill="#306858" opacity=".22"/></g><g stroke="#000" fill="none" stroke-width="1"><path d="M37.5 186v13M32 201.5h11M34 203.5h7M36 205.5h3"/><path d="M91.5 186v14"/><path d="M87.5 200.5h8l-4 4z" fill="#fff" shape-rendering="auto"/><path d="M140 191.5h15M147.5 186v5" /><path d="M140.5 191.5l-7 7M147.5 191.5l-7 7M154.5 191.5l-7 7" shape-rendering="auto"/><path d="M187 194.5h10M202 194.5h9M197.5 186v17M201.5 189v11"/><path d="M28 255.5l2-3l3 6l3-6l3 6l3-6l3 6l2-3" shape-rendering="auto"/><path d="M91.5 242v4l-3 2l5 2.5l-5 2.5l5 2.5l-5 2.5l3 2v6M83 254.5h16" shape-rendering="auto"/><path d="M145.5 242v23M136 252.5h19"/><path d="M136 260c3-4 16-4 19 0" shape-rendering="auto"/><path d="M187 254.5h10M202 254.5h9M197.5 244v20M201.5 244v20"/><path d="M37.5 305v20"/><path d="M31.5 305l6 7l6-7" shape-rendering="auto"/><path d="M91.5 301L102.5 312L94 320.5M91.5 301L80.5 312L89 320.5" stroke-width="1.2" shape-rendering="auto"/><path d="M89.5 320v7M93.5 320v7"/><path d="M144.5 303v7M144.5 318v7"/><rect x="138.5" y="310.5" width="12" height="7" fill="#fff" stroke-width="1"/><rect x="138" y="310" width="13" height="2" fill="#000" stroke="none"/><rect x="138" y="316" width="13" height="2" fill="#000" stroke="none"/><path d="M198.5 302v7M198.5 317v8"/><path d="M198.5 309l4 4l-4 4" shape-rendering="auto"/></g><rect x="10" y="341" width="10" height="12" fill="#000"/><rect x="11" y="342" width="8" height="10" fill="#00e040"/><rect x="12" y="344" width="6" height="6" fill="#e8fff0"/><rect x="14" y="344" width="1" height="6" fill="#008020"/><rect x="12" y="346" width="6" height="1" fill="#008020"/><rect x="10" y="358" width="10" height="12" fill="#000"/><rect x="11" y="359" width="8" height="10" fill="#00e040"/><rect x="12" y="361" width="6" height="6" fill="#e8fff0"/><rect x="14" y="361" width="1" height="6" fill="#008020"/><rect x="12" y="363" width="6" height="1" fill="#008020"/><rect x="10" y="375" width="10" height="12" fill="#000"/><rect x="11" y="376" width="8" height="10" fill="#00e040"/><rect x="12" y="378" width="6" height="6" fill="#e8fff0"/><rect x="14" y="378" width="1" height="6" fill="#008020"/><rect x="12" y="380" width="6" height="1" fill="#008020"/><rect x="10" y="392" width="10" height="12" fill="#000"/><rect x="11" y="393" width="8" height="10" fill="#00e040"/><rect x="12" y="395" width="6" height="6" fill="#e8fff0"/><rect x="14" y="395" width="1" height="6" fill="#008020"/><rect x="12" y="397" width="6" height="1" fill="#008020"/><rect x="213.5" y="416.5" width="8" height="8" fill="none" stroke="#000"/><rect x="213" y="416" width="9" height="2" fill="#000"/><path d="M233.5 417.5l7 7M240.5 417.5l-7 7" stroke="#000" stroke-width="1.3" shape-rendering="auto"/><rect x="1024" y="296" width="16" height="59" fill="#c6c6c6"/><rect x="1024" y="296" width="15" height="1" fill="#e8e8e8"/><rect x="1024" y="296" width="1" height="58" fill="#e8e8e8"/><rect x="1025" y="297" width="13" height="1" fill="#fff"/><rect x="1025" y="297" width="1" height="56" fill="#fff"/><rect x="1024" y="354" width="16" height="1" fill="#000"/><rect x="1039" y="296" width="1" height="59" fill="#000"/><rect x="1025" y="353" width="14" height="1" fill="#808080"/><rect x="1038" y="297" width="1" height="57" fill="#808080"/><rect x="1025" y="686" width="15" height="15" fill="#c6c6c6"/><rect x="1025" y="686" width="14" height="1" fill="#e8e8e8"/><rect x="1025" y="686" width="1" height="14" fill="#e8e8e8"/><rect x="1026" y="687" width="12" height="1" fill="#fff"/><rect x="1026" y="687" width="1" height="12" fill="#fff"/><rect x="1025" y="700" width="15" height="1" fill="#000"/><rect x="1039" y="686" width="1" height="15" fill="#000"/><rect x="1026" y="699" width="13" height="1" fill="#808080"/><rect x="1038" y="687" width="1" height="13" fill="#808080"/><path d="M1029 692h7v1h-1v1h-1v1h-1v1h-1v-1h-1v-1h-1v-1h-1z" fill="#000"/><rect x="637" y="701" width="16" height="16" fill="#c6c6c6"/><rect x="637" y="701" width="15" height="1" fill="#e8e8e8"/><rect x="637" y="701" width="1" height="15" fill="#e8e8e8"/><rect x="638" y="702" width="13" height="1" fill="#fff"/><rect x="638" y="702" width="1" height="13" fill="#fff"/><rect x="637" y="716" width="16" height="1" fill="#000"/><rect x="652" y="701" width="1" height="16" fill="#000"/><rect x="638" y="715" width="14" height="1" fill="#808080"/><rect x="651" y="702" width="1" height="14" fill="#808080"/><path d="M644 705h1v7h-1v-1h-1v-1h-1v-1h-1v-1h1v-1h1v-1h1z" fill="#000"/><rect x="631" y="701" width="6" height="16" fill="#c6c6c6"/><rect x="632" y="702" width="1" height="14" fill="#fff"/><rect x="636" y="701" width="1" height="16" fill="#000"/><rect x="631" y="716" width="6" height="1" fill="#000"/><rect x="801" y="701" width="57" height="16" fill="#c6c6c6"/><rect x="801" y="701" width="56" height="1" fill="#e8e8e8"/><rect x="801" y="701" width="1" height="15" fill="#e8e8e8"/><rect x="802" y="702" width="54" height="1" fill="#fff"/><rect x="802" y="702" width="1" height="13" fill="#fff"/><rect x="801" y="716" width="57" height="1" fill="#000"/><rect x="857" y="701" width="1" height="16" fill="#000"/><rect x="802" y="715" width="55" height="1" fill="#808080"/><rect x="856" y="702" width="1" height="14" fill="#808080"/><rect x="1008" y="701" width="16" height="16" fill="#c6c6c6"/><rect x="1008" y="701" width="15" height="1" fill="#e8e8e8"/><rect x="1008" y="701" width="1" height="15" fill="#e8e8e8"/><rect x="1009" y="702" width="13" height="1" fill="#fff"/><rect x="1009" y="702" width="1" height="13" fill="#fff"/><rect x="1008" y="716" width="16" height="1" fill="#000"/><rect x="1023" y="701" width="1" height="16" fill="#000"/><rect x="1009" y="715" width="14" height="1" fill="#808080"/><rect x="1022" y="702" width="1" height="14" fill="#808080"/><path d="M1014 705h1v1h1v1h1v1h1v1h-1v1h-1v1h-1v1h-1z" fill="#000"/><path d="M258 705v8M264 705v8l-5-4z" fill="#000" stroke="none"/><rect x="258" y="705" width="1" height="8" fill="#000"/><path d="M279 705v8l-4.5-4z" fill="#000"/><path d="M291 705v8l4.5-4z" fill="#000"/><path d="M306 705v8l4.5-4z" fill="#000"/><rect x="311" y="705" width="1" height="8" fill="#000"/><rect x="315" y="702" width="1" height="15" fill="#808080"/><path d="M317 701.5l7 15h63l7-15" fill="#fff" stroke="#000"/><path d="M1032 738l9-9M1035 738l6-6M1038 738l3-3" stroke="#fff"/><path d="M1033 738l8-8M1036 738l5-5M1039 738l2-2" stroke="#808080" stroke-width="1.2"/><line x1="270.5" y1="116" x2="270.5" y2="701" stroke="#bbbbbf" stroke-dasharray="1 1"/><line x1="290.5" y1="116" x2="290.5" y2="701" stroke="#bbbbbf" stroke-dasharray="3 1"/><line x1="310.5" y1="116" x2="310.5" y2="701" stroke="#bbbbbf" stroke-dasharray="1 1"/><line x1="330.5" y1="116" x2="330.5" y2="701" stroke="#bbbbbf" stroke-dasharray="3 1"/><line x1="350.5" y1="116" x2="350.5" y2="701" stroke="#bbbbbf" stroke-dasharray="1 1"/><line x1="370.5" y1="116" x2="370.5" y2="701" stroke="#bbbbbf" stroke-dasharray="3 1"/><line x1="390.5" y1="116" x2="390.5" y2="701" stroke="#bbbbbf" stroke-dasharray="1 1"/><line x1="410.5" y1="116" x2="410.5" y2="701" stroke="#bbbbbf" stroke-dasharray="3 1"/><line x1="430.5" y1="116" x2="430.5" y2="701" stroke="#bbbbbf" stroke-dasharray="1 1"/><line x1="450.5" y1="116" x2="450.5" y2="701" stroke="#bbbbbf" stroke-dasharray="3 1"/><line x1="470.5" y1="116" x2="470.5" y2="701" stroke="#bbbbbf" stroke-dasharray="1 1"/><line x1="490.5" y1="116" x2="490.5" y2="701" stroke="#bbbbbf" stroke-dasharray="3 1"/><line x1="510.5" y1="116" x2="510.5" y2="701" stroke="#bbbbbf" stroke-dasharray="1 1"/><line x1="530.5" y1="116" x2="530.5" y2="701" stroke="#bbbbbf" stroke-dasharray="3 1"/><line x1="550.5" y1="116" x2="550.5" y2="701" stroke="#bbbbbf" stroke-dasharray="1 1"/><line x1="570.5" y1="116" x2="570.5" y2="701" stroke="#bbbbbf" stroke-dasharray="3 1"/><line x1="590.5" y1="116" x2="590.5" y2="701" stroke="#bbbbbf" stroke-dasharray="1 1"/><line x1="610.5" y1="116" x2="610.5" y2="701" stroke="#bbbbbf" stroke-dasharray="3 1"/><line x1="630.5" y1="116" x2="630.5" y2="701" stroke="#bbbbbf" stroke-dasharray="1 1"/><line x1="650.5" y1="116" x2="650.5" y2="701" stroke="#bbbbbf" stroke-dasharray="3 1"/><line x1="670.5" y1="116" x2="670.5" y2="701" stroke="#bbbbbf" stroke-dasharray="1 1"/><line x1="690.5" y1="116" x2="690.5" y2="701" stroke="#bbbbbf" stroke-dasharray="3 1"/><line x1="710.5" y1="116" x2="710.5" y2="701" stroke="#bbbbbf" stroke-dasharray="1 1"/><line x1="730.5" y1="116" x2="730.5" y2="701" stroke="#bbbbbf" stroke-dasharray="3 1"/><line x1="750.5" y1="116" x2="750.5" y2="701" stroke="#bbbbbf" stroke-dasharray="1 1"/><line x1="770.5" y1="116" x2="770.5" y2="701" stroke="#bbbbbf" stroke-dasharray="3 1"/><line x1="790.5" y1="116" x2="790.5" y2="701" stroke="#bbbbbf" stroke-dasharray="1 1"/><line x1="810.5" y1="116" x2="810.5" y2="701" stroke="#bbbbbf" stroke-dasharray="3 1"/><line x1="830.5" y1="116" x2="830.5" y2="701" stroke="#bbbbbf" stroke-dasharray="1 1"/><line x1="850.5" y1="116" x2="850.5" y2="701" stroke="#bbbbbf" stroke-dasharray="3 1"/><line x1="870.5" y1="116" x2="870.5" y2="701" stroke="#bbbbbf" stroke-dasharray="1 1"/><line x1="890.5" y1="116" x2="890.5" y2="701" stroke="#bbbbbf" stroke-dasharray="3 1"/><line x1="910.5" y1="116" x2="910.5" y2="701" stroke="#bbbbbf" stroke-dasharray="1 1"/><line x1="930.5" y1="116" x2="930.5" y2="701" stroke="#bbbbbf" stroke-dasharray="3 1"/><line x1="950.5" y1="116" x2="950.5" y2="701" stroke="#bbbbbf" stroke-dasharray="1 1"/><line x1="970.5" y1="116" x2="970.5" y2="701" stroke="#bbbbbf" stroke-dasharray="3 1"/><line x1="990.5" y1="116" x2="990.5" y2="701" stroke="#bbbbbf" stroke-dasharray="1 1"/><line x1="1010.5" y1="116" x2="1010.5" y2="701" stroke="#bbbbbf" stroke-dasharray="3 1"/><line x1="268" y1="136.5" x2="1024" y2="136.5" stroke="#bbbbbf" stroke-dasharray="3 1" stroke-dashoffset="2"/><line x1="268" y1="156.5" x2="1024" y2="156.5" stroke="#bbbbbf" stroke-dasharray="1 1" stroke-dashoffset="0"/><line x1="268" y1="176.5" x2="1024" y2="176.5" stroke="#bbbbbf" stroke-dasharray="3 1" stroke-dashoffset="2"/><line x1="268" y1="196.5" x2="1024" y2="196.5" stroke="#bbbbbf" stroke-dasharray="1 1" stroke-dashoffset="0"/><line x1="268" y1="216.5" x2="1024" y2="216.5" stroke="#bbbbbf" stroke-dasharray="3 1" stroke-dashoffset="2"/><line x1="268" y1="236.5" x2="1024" y2="236.5" stroke="#bbbbbf" stroke-dasharray="1 1" stroke-dashoffset="0"/><line x1="268" y1="256.5" x2="1024" y2="256.5" stroke="#bbbbbf" stroke-dasharray="3 1" stroke-dashoffset="2"/><line x1="268" y1="276.5" x2="1024" y2="276.5" stroke="#bbbbbf" stroke-dasharray="1 1" stroke-dashoffset="0"/><line x1="268" y1="296.5" x2="1024" y2="296.5" stroke="#bbbbbf" stroke-dasharray="3 1" stroke-dashoffset="2"/><line x1="268" y1="316.5" x2="1024" y2="316.5" stroke="#bbbbbf" stroke-dasharray="1 1" stroke-dashoffset="0"/><line x1="268" y1="336.5" x2="1024" y2="336.5" stroke="#bbbbbf" stroke-dasharray="3 1" stroke-dashoffset="2"/><line x1="268" y1="356.5" x2="1024" y2="356.5" stroke="#bbbbbf" stroke-dasharray="1 1" stroke-dashoffset="0"/><line x1="268" y1="376.5" x2="1024" y2="376.5" stroke="#bbbbbf" stroke-dasharray="3 1" stroke-dashoffset="2"/><line x1="268" y1="396.5" x2="1024" y2="396.5" stroke="#bbbbbf" stroke-dasharray="1 1" stroke-dashoffset="0"/><line x1="268" y1="416.5" x2="1024" y2="416.5" stroke="#bbbbbf" stroke-dasharray="3 1" stroke-dashoffset="2"/><line x1="268" y1="436.5" x2="1024" y2="436.5" stroke="#bbbbbf" stroke-dasharray="1 1" stroke-dashoffset="0"/><line x1="268" y1="456.5" x2="1024" y2="456.5" stroke="#bbbbbf" stroke-dasharray="3 1" stroke-dashoffset="2"/><line x1="268" y1="476.5" x2="1024" y2="476.5" stroke="#bbbbbf" stroke-dasharray="1 1" stroke-dashoffset="0"/><line x1="268" y1="496.5" x2="1024" y2="496.5" stroke="#bbbbbf" stroke-dasharray="3 1" stroke-dashoffset="2"/><line x1="268" y1="516.5" x2="1024" y2="516.5" stroke="#bbbbbf" stroke-dasharray="1 1" stroke-dashoffset="0"/><line x1="268" y1="536.5" x2="1024" y2="536.5" stroke="#bbbbbf" stroke-dasharray="3 1" stroke-dashoffset="2"/><line x1="268" y1="556.5" x2="1024" y2="556.5" stroke="#bbbbbf" stroke-dasharray="1 1" stroke-dashoffset="0"/><line x1="268" y1="576.5" x2="1024" y2="576.5" stroke="#bbbbbf" stroke-dasharray="3 1" stroke-dashoffset="2"/><line x1="268" y1="596.5" x2="1024" y2="596.5" stroke="#bbbbbf" stroke-dasharray="1 1" stroke-dashoffset="0"/><line x1="268" y1="616.5" x2="1024" y2="616.5" stroke="#bbbbbf" stroke-dasharray="3 1" stroke-dashoffset="2"/><line x1="268" y1="636.5" x2="1024" y2="636.5" stroke="#bbbbbf" stroke-dasharray="1 1" stroke-dashoffset="0"/><line x1="268" y1="656.5" x2="1024" y2="656.5" stroke="#bbbbbf" stroke-dasharray="3 1" stroke-dashoffset="2"/><line x1="268" y1="676.5" x2="1024" y2="676.5" stroke="#bbbbbf" stroke-dasharray="1 1" stroke-dashoffset="0"/><line x1="268" y1="696.5" x2="1024" y2="696.5" stroke="#bbbbbf" stroke-dasharray="3 1" stroke-dashoffset="2"/><rect x="252" y="100" width="772" height="15" fill="#fcfcfc"/><rect x="252" y="116" width="15" height="585" fill="#fcfcfc"/><rect x="251" y="99" width="790" height="1" fill="#000"/><rect x="251" y="115" width="790" height="1" fill="#000"/><rect x="251" y="99" width="1" height="618" fill="#000"/><rect x="267" y="99" width="1" height="603" fill="#000"/><rect x="1040" y="99" width="1" height="17" fill="#000"/><rect x="251" y="701" width="380" height="1" fill="#000"/><g fill="#0000ff"><rect x="252" y="107" width="1" height="1"/><rect x="254" y="107" width="1" height="1"/><rect x="256" y="107" width="1" height="1"/><rect x="262" y="107" width="1" height="1"/><rect x="264" y="107" width="1" height="1"/><rect x="266" y="107" width="1" height="1"/><rect x="259" y="100" width="1" height="1"/><rect x="259" y="102" width="1" height="1"/><rect x="259" y="104" width="1" height="1"/><rect x="259" y="110" width="1" height="1"/><rect x="259" y="112" width="1" height="1"/><rect x="259" y="114" width="1" height="1"/><path d="M258 106h3v3h-3z" fill="none" stroke="#0000ff" stroke-width="1" transform="translate(.5,.5)"/></g><rect x="270" y="105" width="1" height="10" fill="#000"/><rect x="274" y="107" width="1" height="8" fill="#000"/><rect x="278" y="109" width="1" height="6" fill="#000"/><rect x="282" y="107" width="1" height="8" fill="#000"/><rect x="286" y="109" width="1" height="6" fill="#000"/><rect x="290" y="100" width="1" height="15" fill="#000"/><rect x="294" y="109" width="1" height="6" fill="#000"/><rect x="298" y="109" width="1" height="6" fill="#000"/><rect x="302" y="109" width="1" height="6" fill="#000"/><rect x="306" y="107" width="1" height="8" fill="#000"/><rect x="310" y="105" width="1" height="10" fill="#000"/><rect x="314" y="107" width="1" height="8" fill="#000"/><rect x="318" y="109" width="1" height="6" fill="#000"/><rect x="322" y="107" width="1" height="8" fill="#000"/><rect x="326" y="109" width="1" height="6" fill="#000"/><rect x="330" y="100" width="1" height="15" fill="#000"/><rect x="334" y="109" width="1" height="6" fill="#000"/><rect x="338" y="109" width="1" height="6" fill="#000"/><rect x="342" y="109" width="1" height="6" fill="#000"/><rect x="346" y="107" width="1" height="8" fill="#000"/><rect x="350" y="105" width="1" height="10" fill="#000"/><rect x="354" y="107" width="1" height="8" fill="#000"/><rect x="358" y="109" width="1" height="6" fill="#000"/><rect x="362" y="107" width="1" height="8" fill="#000"/><rect x="366" y="109" width="1" height="6" fill="#000"/><rect x="370" y="100" width="1" height="15" fill="#000"/><rect x="374" y="109" width="1" height="6" fill="#000"/><rect x="378" y="109" width="1" height="6" fill="#000"/><rect x="382" y="109" width="1" height="6" fill="#000"/><rect x="386" y="107" width="1" height="8" fill="#000"/><rect x="390" y="105" width="1" height="10" fill="#000"/><rect x="394" y="107" width="1" height="8" fill="#000"/><rect x="398" y="109" width="1" height="6" fill="#000"/><rect x="402" y="107" width="1" height="8" fill="#000"/><rect x="406" y="109" width="1" height="6" fill="#000"/><rect x="410" y="100" width="1" height="15" fill="#000"/><rect x="414" y="109" width="1" height="6" fill="#000"/><rect x="418" y="109" width="1" height="6" fill="#000"/><rect x="422" y="109" width="1" height="6" fill="#000"/><rect x="426" y="107" width="1" height="8" fill="#000"/><rect x="430" y="105" width="1" height="10" fill="#000"/><rect x="434" y="107" width="1" height="8" fill="#000"/><rect x="438" y="109" width="1" height="6" fill="#000"/><rect x="442" y="107" width="1" height="8" fill="#000"/><rect x="446" y="109" width="1" height="6" fill="#000"/><rect x="450" y="100" width="1" height="15" fill="#000"/><rect x="454" y="109" width="1" height="6" fill="#000"/><rect x="458" y="109" width="1" height="6" fill="#000"/><rect x="462" y="109" width="1" height="6" fill="#000"/><rect x="466" y="107" width="1" height="8" fill="#000"/><rect x="470" y="105" width="1" height="10" fill="#000"/><rect x="474" y="107" width="1" height="8" fill="#000"/><rect x="478" y="109" width="1" height="6" fill="#000"/><rect x="482" y="107" width="1" height="8" fill="#000"/><rect x="486" y="109" width="1" height="6" fill="#000"/><rect x="490" y="100" width="1" height="15" fill="#000"/><rect x="494" y="109" width="1" height="6" fill="#000"/><rect x="498" y="109" width="1" height="6" fill="#000"/><rect x="502" y="109" width="1" height="6" fill="#000"/><rect x="506" y="107" width="1" height="8" fill="#000"/><rect x="510" y="105" width="1" height="10" fill="#000"/><rect x="514" y="107" width="1" height="8" fill="#000"/><rect x="518" y="109" width="1" height="6" fill="#000"/><rect x="522" y="107" width="1" height="8" fill="#000"/><rect x="526" y="109" width="1" height="6" fill="#000"/><rect x="530" y="100" width="1" height="15" fill="#000"/><rect x="534" y="109" width="1" height="6" fill="#000"/><rect x="538" y="109" width="1" height="6" fill="#000"/><rect x="542" y="109" width="1" height="6" fill="#000"/><rect x="546" y="107" width="1" height="8" fill="#000"/><rect x="550" y="105" width="1" height="10" fill="#000"/><rect x="554" y="107" width="1" height="8" fill="#000"/><rect x="558" y="109" width="1" height="6" fill="#000"/><rect x="562" y="107" width="1" height="8" fill="#000"/><rect x="566" y="109" width="1" height="6" fill="#000"/><rect x="570" y="100" width="1" height="15" fill="#000"/><rect x="574" y="109" width="1" height="6" fill="#000"/><rect x="578" y="109" width="1" height="6" fill="#000"/><rect x="582" y="109" width="1" height="6" fill="#000"/><rect x="586" y="107" width="1" height="8" fill="#000"/><rect x="590" y="105" width="1" height="10" fill="#000"/><rect x="594" y="107" width="1" height="8" fill="#000"/><rect x="598" y="109" width="1" height="6" fill="#000"/><rect x="602" y="107" width="1" height="8" fill="#000"/><rect x="606" y="109" width="1" height="6" fill="#000"/><rect x="610" y="100" width="1" height="15" fill="#000"/><rect x="614" y="109" width="1" height="6" fill="#000"/><rect x="618" y="109" width="1" height="6" fill="#000"/><rect x="622" y="109" width="1" height="6" fill="#000"/><rect x="626" y="107" width="1" height="8" fill="#000"/><rect x="630" y="105" width="1" height="10" fill="#000"/><rect x="634" y="107" width="1" height="8" fill="#000"/><rect x="638" y="109" width="1" height="6" fill="#000"/><rect x="642" y="107" width="1" height="8" fill="#000"/><rect x="646" y="109" width="1" height="6" fill="#000"/><rect x="650" y="100" width="1" height="15" fill="#000"/><rect x="654" y="109" width="1" height="6" fill="#000"/><rect x="658" y="109" width="1" height="6" fill="#000"/><rect x="662" y="109" width="1" height="6" fill="#000"/><rect x="666" y="107" width="1" height="8" fill="#000"/><rect x="670" y="105" width="1" height="10" fill="#000"/><rect x="674" y="107" width="1" height="8" fill="#000"/><rect x="678" y="109" width="1" height="6" fill="#000"/><rect x="682" y="107" width="1" height="8" fill="#000"/><rect x="686" y="109" width="1" height="6" fill="#000"/><rect x="690" y="100" width="1" height="15" fill="#000"/><rect x="694" y="109" width="1" height="6" fill="#000"/><rect x="698" y="109" width="1" height="6" fill="#000"/><rect x="702" y="109" width="1" height="6" fill="#000"/><rect x="706" y="107" width="1" height="8" fill="#000"/><rect x="710" y="105" width="1" height="10" fill="#000"/><rect x="714" y="107" width="1" height="8" fill="#000"/><rect x="718" y="109" width="1" height="6" fill="#000"/><rect x="722" y="107" width="1" height="8" fill="#000"/><rect x="726" y="109" width="1" height="6" fill="#000"/><rect x="730" y="100" width="1" height="15" fill="#000"/><rect x="734" y="109" width="1" height="6" fill="#000"/><rect x="738" y="109" width="1" height="6" fill="#000"/><rect x="742" y="109" width="1" height="6" fill="#000"/><rect x="746" y="107" width="1" height="8" fill="#000"/><rect x="750" y="105" width="1" height="10" fill="#000"/><rect x="754" y="107" width="1" height="8" fill="#000"/><rect x="758" y="109" width="1" height="6" fill="#000"/><rect x="762" y="107" width="1" height="8" fill="#000"/><rect x="766" y="109" width="1" height="6" fill="#000"/><rect x="770" y="100" width="1" height="15" fill="#000"/><rect x="774" y="109" width="1" height="6" fill="#000"/><rect x="778" y="109" width="1" height="6" fill="#000"/><rect x="782" y="109" width="1" height="6" fill="#000"/><rect x="786" y="107" width="1" height="8" fill="#000"/><rect x="790" y="105" width="1" height="10" fill="#000"/><rect x="794" y="107" width="1" height="8" fill="#000"/><rect x="798" y="109" width="1" height="6" fill="#000"/><rect x="802" y="107" width="1" height="8" fill="#000"/><rect x="806" y="109" width="1" height="6" fill="#000"/><rect x="810" y="100" width="1" height="15" fill="#000"/><rect x="814" y="109" width="1" height="6" fill="#000"/><rect x="818" y="109" width="1" height="6" fill="#000"/><rect x="822" y="109" width="1" height="6" fill="#000"/><rect x="826" y="107" width="1" height="8" fill="#000"/><rect x="830" y="105" width="1" height="10" fill="#000"/><rect x="834" y="107" width="1" height="8" fill="#000"/><rect x="838" y="109" width="1" height="6" fill="#000"/><rect x="842" y="107" width="1" height="8" fill="#000"/><rect x="846" y="109" width="1" height="6" fill="#000"/><rect x="850" y="100" width="1" height="15" fill="#000"/><rect x="854" y="109" width="1" height="6" fill="#000"/><rect x="858" y="109" width="1" height="6" fill="#000"/><rect x="862" y="109" width="1" height="6" fill="#000"/><rect x="866" y="107" width="1" height="8" fill="#000"/><rect x="870" y="105" width="1" height="10" fill="#000"/><rect x="874" y="107" width="1" height="8" fill="#000"/><rect x="878" y="109" width="1" height="6" fill="#000"/><rect x="882" y="107" width="1" height="8" fill="#000"/><rect x="886" y="109" width="1" height="6" fill="#000"/><rect x="890" y="100" width="1" height="15" fill="#000"/><rect x="894" y="109" width="1" height="6" fill="#000"/><rect x="898" y="109" width="1" height="6" fill="#000"/><rect x="902" y="109" width="1" height="6" fill="#000"/><rect x="906" y="107" width="1" height="8" fill="#000"/><rect x="910" y="105" width="1" height="10" fill="#000"/><rect x="914" y="107" width="1" height="8" fill="#000"/><rect x="918" y="109" width="1" height="6" fill="#000"/><rect x="922" y="107" width="1" height="8" fill="#000"/><rect x="926" y="109" width="1" height="6" fill="#000"/><rect x="930" y="100" width="1" height="15" fill="#000"/><rect x="934" y="109" width="1" height="6" fill="#000"/><rect x="938" y="109" width="1" height="6" fill="#000"/><rect x="942" y="109" width="1" height="6" fill="#000"/><rect x="946" y="107" width="1" height="8" fill="#000"/><rect x="950" y="105" width="1" height="10" fill="#000"/><rect x="954" y="107" width="1" height="8" fill="#000"/><rect x="958" y="109" width="1" height="6" fill="#000"/><rect x="962" y="107" width="1" height="8" fill="#000"/><rect x="966" y="109" width="1" height="6" fill="#000"/><rect x="970" y="100" width="1" height="15" fill="#000"/><rect x="974" y="109" width="1" height="6" fill="#000"/><rect x="978" y="109" width="1" height="6" fill="#000"/><rect x="982" y="109" width="1" height="6" fill="#000"/><rect x="986" y="107" width="1" height="8" fill="#000"/><rect x="990" y="105" width="1" height="10" fill="#000"/><rect x="994" y="107" width="1" height="8" fill="#000"/><rect x="998" y="109" width="1" height="6" fill="#000"/><rect x="1002" y="107" width="1" height="8" fill="#000"/><rect x="1006" y="109" width="1" height="6" fill="#000"/><rect x="1010" y="100" width="1" height="15" fill="#000"/><rect x="1014" y="109" width="1" height="6" fill="#000"/><rect x="1018" y="109" width="1" height="6" fill="#000"/><rect x="1022" y="109" width="1" height="6" fill="#000"/><rect x="259" y="120" width="8" height="1" fill="#000"/><rect x="261" y="124" width="6" height="1" fill="#000"/><rect x="259" y="128" width="8" height="1" fill="#000"/><rect x="261" y="132" width="6" height="1" fill="#000"/><rect x="252" y="136" width="15" height="1" fill="#000"/><rect x="261" y="140" width="6" height="1" fill="#000"/><rect x="261" y="144" width="6" height="1" fill="#000"/><rect x="261" y="148" width="6" height="1" fill="#000"/><rect x="259" y="152" width="8" height="1" fill="#000"/><rect x="257" y="156" width="10" height="1" fill="#000"/><rect x="259" y="160" width="8" height="1" fill="#000"/><rect x="261" y="164" width="6" height="1" fill="#000"/><rect x="259" y="168" width="8" height="1" fill="#000"/><rect x="261" y="172" width="6" height="1" fill="#000"/><rect x="252" y="176" width="15" height="1" fill="#000"/><rect x="261" y="180" width="6" height="1" fill="#000"/><rect x="261" y="184" width="6" height="1" fill="#000"/><rect x="261" y="188" width="6" height="1" fill="#000"/><rect x="259" y="192" width="8" height="1" fill="#000"/><rect x="257" y="196" width="10" height="1" fill="#000"/><rect x="259" y="200" width="8" height="1" fill="#000"/><rect x="261" y="204" width="6" height="1" fill="#000"/><rect x="259" y="208" width="8" height="1" fill="#000"/><rect x="261" y="212" width="6" height="1" fill="#000"/><rect x="252" y="216" width="15" height="1" fill="#000"/><rect x="261" y="220" width="6" height="1" fill="#000"/><rect x="261" y="224" width="6" height="1" fill="#000"/><rect x="261" y="228" width="6" height="1" fill="#000"/><rect x="259" y="232" width="8" height="1" fill="#000"/><rect x="257" y="236" width="10" height="1" fill="#000"/><rect x="259" y="240" width="8" height="1" fill="#000"/><rect x="261" y="244" width="6" height="1" fill="#000"/><rect x="259" y="248" width="8" height="1" fill="#000"/><rect x="261" y="252" width="6" height="1" fill="#000"/><rect x="252" y="256" width="15" height="1" fill="#000"/><rect x="261" y="260" width="6" height="1" fill="#000"/><rect x="261" y="264" width="6" height="1" fill="#000"/><rect x="261" y="268" width="6" height="1" fill="#000"/><rect x="259" y="272" width="8" height="1" fill="#000"/><rect x="257" y="276" width="10" height="1" fill="#000"/><rect x="259" y="280" width="8" height="1" fill="#000"/><rect x="261" y="284" width="6" height="1" fill="#000"/><rect x="259" y="288" width="8" height="1" fill="#000"/><rect x="261" y="292" width="6" height="1" fill="#000"/><rect x="252" y="296" width="15" height="1" fill="#000"/><rect x="261" y="300" width="6" height="1" fill="#000"/><rect x="261" y="304" width="6" height="1" fill="#000"/><rect x="261" y="308" width="6" height="1" fill="#000"/><rect x="259" y="312" width="8" height="1" fill="#000"/><rect x="257" y="316" width="10" height="1" fill="#000"/><rect x="259" y="320" width="8" height="1" fill="#000"/><rect x="261" y="324" width="6" height="1" fill="#000"/><rect x="259" y="328" width="8" height="1" fill="#000"/><rect x="261" y="332" width="6" height="1" fill="#000"/><rect x="252" y="336" width="15" height="1" fill="#000"/><rect x="261" y="340" width="6" height="1" fill="#000"/><rect x="261" y="344" width="6" height="1" fill="#000"/><rect x="261" y="348" width="6" height="1" fill="#000"/><rect x="259" y="352" width="8" height="1" fill="#000"/><rect x="257" y="356" width="10" height="1" fill="#000"/><rect x="259" y="360" width="8" height="1" fill="#000"/><rect x="261" y="364" width="6" height="1" fill="#000"/><rect x="259" y="368" width="8" height="1" fill="#000"/><rect x="261" y="372" width="6" height="1" fill="#000"/><rect x="252" y="376" width="15" height="1" fill="#000"/><rect x="261" y="380" width="6" height="1" fill="#000"/><rect x="261" y="384" width="6" height="1" fill="#000"/><rect x="261" y="388" width="6" height="1" fill="#000"/><rect x="259" y="392" width="8" height="1" fill="#000"/><rect x="257" y="396" width="10" height="1" fill="#000"/><rect x="259" y="400" width="8" height="1" fill="#000"/><rect x="261" y="404" width="6" height="1" fill="#000"/><rect x="259" y="408" width="8" height="1" fill="#000"/><rect x="261" y="412" width="6" height="1" fill="#000"/><rect x="252" y="416" width="15" height="1" fill="#000"/><rect x="261" y="420" width="6" height="1" fill="#000"/><rect x="261" y="424" width="6" height="1" fill="#000"/><rect x="261" y="428" width="6" height="1" fill="#000"/><rect x="259" y="432" width="8" height="1" fill="#000"/><rect x="257" y="436" width="10" height="1" fill="#000"/><rect x="259" y="440" width="8" height="1" fill="#000"/><rect x="261" y="444" width="6" height="1" fill="#000"/><rect x="259" y="448" width="8" height="1" fill="#000"/><rect x="261" y="452" width="6" height="1" fill="#000"/><rect x="252" y="456" width="15" height="1" fill="#000"/><rect x="261" y="460" width="6" height="1" fill="#000"/><rect x="261" y="464" width="6" height="1" fill="#000"/><rect x="261" y="468" width="6" height="1" fill="#000"/><rect x="259" y="472" width="8" height="1" fill="#000"/><rect x="257" y="476" width="10" height="1" fill="#000"/><rect x="259" y="480" width="8" height="1" fill="#000"/><rect x="261" y="484" width="6" height="1" fill="#000"/><rect x="259" y="488" width="8" height="1" fill="#000"/><rect x="261" y="492" width="6" height="1" fill="#000"/><rect x="252" y="496" width="15" height="1" fill="#000"/><rect x="261" y="500" width="6" height="1" fill="#000"/><rect x="261" y="504" width="6" height="1" fill="#000"/><rect x="261" y="508" width="6" height="1" fill="#000"/><rect x="259" y="512" width="8" height="1" fill="#000"/><rect x="257" y="516" width="10" height="1" fill="#000"/><rect x="259" y="520" width="8" height="1" fill="#000"/><rect x="261" y="524" width="6" height="1" fill="#000"/><rect x="259" y="528" width="8" height="1" fill="#000"/><rect x="261" y="532" width="6" height="1" fill="#000"/><rect x="252" y="536" width="15" height="1" fill="#000"/><rect x="261" y="540" width="6" height="1" fill="#000"/><rect x="261" y="544" width="6" height="1" fill="#000"/><rect x="261" y="548" width="6" height="1" fill="#000"/><rect x="259" y="552" width="8" height="1" fill="#000"/><rect x="257" y="556" width="10" height="1" fill="#000"/><rect x="259" y="560" width="8" height="1" fill="#000"/><rect x="261" y="564" width="6" height="1" fill="#000"/><rect x="259" y="568" width="8" height="1" fill="#000"/><rect x="261" y="572" width="6" height="1" fill="#000"/><rect x="252" y="576" width="15" height="1" fill="#000"/><rect x="261" y="580" width="6" height="1" fill="#000"/><rect x="261" y="584" width="6" height="1" fill="#000"/><rect x="261" y="588" width="6" height="1" fill="#000"/><rect x="259" y="592" width="8" height="1" fill="#000"/><rect x="257" y="596" width="10" height="1" fill="#000"/><rect x="259" y="600" width="8" height="1" fill="#000"/><rect x="261" y="604" width="6" height="1" fill="#000"/><rect x="259" y="608" width="8" height="1" fill="#000"/><rect x="261" y="612" width="6" height="1" fill="#000"/><rect x="252" y="616" width="15" height="1" fill="#000"/><rect x="261" y="620" width="6" height="1" fill="#000"/><rect x="261" y="624" width="6" height="1" fill="#000"/><rect x="261" y="628" width="6" height="1" fill="#000"/><rect x="259" y="632" width="8" height="1" fill="#000"/><rect x="257" y="636" width="10" height="1" fill="#000"/><rect x="259" y="640" width="8" height="1" fill="#000"/><rect x="261" y="644" width="6" height="1" fill="#000"/><rect x="259" y="648" width="8" height="1" fill="#000"/><rect x="261" y="652" width="6" height="1" fill="#000"/><rect x="252" y="656" width="15" height="1" fill="#000"/><rect x="261" y="660" width="6" height="1" fill="#000"/><rect x="261" y="664" width="6" height="1" fill="#000"/><rect x="261" y="668" width="6" height="1" fill="#000"/><rect x="259" y="672" width="8" height="1" fill="#000"/><rect x="257" y="676" width="10" height="1" fill="#000"/><rect x="259" y="680" width="8" height="1" fill="#000"/><rect x="261" y="684" width="6" height="1" fill="#000"/><rect x="259" y="688" width="8" height="1" fill="#000"/><rect x="261" y="692" width="6" height="1" fill="#000"/><rect x="252" y="696" width="15" height="1" fill="#000"/><rect x="261" y="700" width="6" height="1" fill="#000"/><defs><clipPath id="rc"><rect x="252" y="100" width="772" height="601"/></clipPath></defs><g fill="#000" clip-path="url(#rc)"><text x="292" y="106.6" font-size="8.5" font-family="Liberation Sans">60</text><text x="332" y="106.6" font-size="8.5" font-family="Liberation Sans">65</text><text x="372" y="106.6" font-size="8.5" font-family="Liberation Sans">70</text><text x="412" y="106.6" font-size="8.5" font-family="Liberation Sans">75</text><text x="452" y="106.6" font-size="8.5" font-family="Liberation Sans">80</text><text x="492" y="106.6" font-size="8.5" font-family="Liberation Sans">85</text><text x="532" y="106.6" font-size="8.5" font-family="Liberation Sans">90</text><text x="572" y="106.6" font-size="8.5" font-family="Liberation Sans">95</text><text x="612" y="106.6" font-size="8.5" font-family="Liberation Sans">100</text><text x="652" y="106.6" font-size="8.5" font-family="Liberation Sans">105</text><text x="692" y="106.6" font-size="8.5" font-family="Liberation Sans">110</text><text x="732" y="106.6" font-size="8.5" font-family="Liberation Sans">115</text><text x="772" y="106.6" font-size="8.5" font-family="Liberation Sans">120</text><text x="812" y="106.6" font-size="8.5" font-family="Liberation Sans">125</text><text x="852" y="106.6" font-size="8.5" font-family="Liberation Sans">130</text><text x="892" y="106.6" font-size="8.5" font-family="Liberation Sans">135</text><text x="932" y="106.6" font-size="8.5" font-family="Liberation Sans">140</text><text x="972" y="106.6" font-size="8.5" font-family="Liberation Sans">145</text><text x="1012" y="106.6" font-size="8.5" font-family="Liberation Sans">150</text><text transform="translate(260,153.5) rotate(-90)" font-size="8.5" font-family="Liberation Sans">280</text><text transform="translate(260,193.5) rotate(-90)" font-size="8.5" font-family="Liberation Sans">275</text><text transform="translate(260,233.5) rotate(-90)" font-size="8.5" font-family="Liberation Sans">270</text><text transform="translate(260,273.5) rotate(-90)" font-size="8.5" font-family="Liberation Sans">265</text><text transform="translate(260,313.5) rotate(-90)" font-size="8.5" font-family="Liberation Sans">260</text><text transform="translate(260,353.5) rotate(-90)" font-size="8.5" font-family="Liberation Sans">255</text><text transform="translate(260,393.5) rotate(-90)" font-size="8.5" font-family="Liberation Sans">250</text><text transform="translate(260,433.5) rotate(-90)" font-size="8.5" font-family="Liberation Sans">245</text><text transform="translate(260,473.5) rotate(-90)" font-size="8.5" font-family="Liberation Sans">240</text><text transform="translate(260,513.5) rotate(-90)" font-size="8.5" font-family="Liberation Sans">235</text><text transform="translate(260,553.5) rotate(-90)" font-size="8.5" font-family="Liberation Sans">230</text><text transform="translate(260,593.5) rotate(-90)" font-size="8.5" font-family="Liberation Sans">225</text><text transform="translate(260,633.5) rotate(-90)" font-size="8.5" font-family="Liberation Sans">220</text><text transform="translate(260,673.5) rotate(-90)" font-size="8.5" font-family="Liberation Sans">215</text><text transform="translate(260,713.5) rotate(-90)" font-size="8.5" font-family="Liberation Sans">210</text></g><rect x="548" y="100" width="5" height="15" fill="#fcfcfc"/><rect x="550" y="102" width="1" height="2" fill="#000"/><rect x="550" y="105" width="1" height="2" fill="#000"/><rect x="550" y="108" width="1" height="2" fill="#000"/><rect x="550" y="111" width="1" height="2" fill="#000"/><rect x="550" y="114" width="1" height="2" fill="#000"/><rect x="252" y="374" width="15" height="5" fill="#fcfcfc"/><rect x="252" y="376" width="2" height="1" fill="#000"/><rect x="255" y="376" width="2" height="1" fill="#000"/><rect x="258" y="376" width="2" height="1" fill="#000"/><rect x="261" y="376" width="2" height="1" fill="#000"/><rect x="264" y="376" width="2" height="1" fill="#000"/><rect x="1024" y="100" width="16" height="15" fill="#c6c6c6"/><rect x="1024" y="115" width="17" height="1" fill="#000"/><rect x="1025" y="101" width="15" height="14" fill="#c6c6c6"/><rect x="1025" y="101" width="14" height="1" fill="#e8e8e8"/><rect x="1025" y="101" width="1" height="13" fill="#e8e8e8"/><rect x="1026" y="102" width="12" height="1" fill="#fff"/><rect x="1026" y="102" width="1" height="11" fill="#fff"/><rect x="1025" y="114" width="15" height="1" fill="#000"/><rect x="1039" y="101" width="1" height="14" fill="#000"/><rect x="1026" y="113" width="13" height="1" fill="#808080"/><rect x="1038" y="102" width="1" height="12" fill="#808080"/><path d="M1032 105h1v1h1v1h1v1h1v1h-7v-1h1v-1h1v-1h1z" fill="#000"/><polyline points="430.5,371 440.5,352.5 460.5,400 480.5,352.5 500.5,400 520.5,352.5 540.5,400 549.5,381" fill="none" stroke="#333" stroke-width="1" shape-rendering="auto"/><rect x="430.5" y="352.5" width="120" height="48" fill="none" stroke="#00ff00" stroke-dasharray="3 2"/><line x1="490.5" y1="332" x2="490.5" y2="352" stroke="#00ff00" stroke-dasharray="3 2"/><rect x="427" y="349" width="7" height="7" fill="#000"/><rect x="428" y="350" width="5" height="5" fill="#00ff00"/><rect x="487" y="349" width="7" height="7" fill="#000"/><rect x="488" y="350" width="5" height="5" fill="#00ff00"/><rect x="547" y="349" width="7" height="7" fill="#000"/><rect x="548" y="350" width="5" height="5" fill="#00ff00"/><rect x="427" y="373" width="7" height="7" fill="#000"/><rect x="428" y="374" width="5" height="5" fill="#00ff00"/><rect x="427" y="397" width="7" height="7" fill="#000"/><rect x="428" y="398" width="5" height="5" fill="#00ff00"/><rect x="487" y="397" width="7" height="7" fill="#000"/><rect x="488" y="398" width="5" height="5" fill="#00ff00"/><rect x="547" y="397" width="7" height="7" fill="#000"/><rect x="548" y="398" width="5" height="5" fill="#00ff00"/><circle cx="490.5" cy="328.5" r="4.2" fill="#00f000" stroke="#000" stroke-width=".9" shape-rendering="auto"/><path d="M541 377h16M540 377l4.5-3.5v7zM558 377l-4.5-3.5v7z" stroke="#fff" fill="#fff" stroke-width="2.2" shape-rendering="auto"/><path d="M541 377h16M540 377l4.5-3.5v7zM558 377l-4.5-3.5v7z" stroke="#000" fill="#000" stroke-width="1.2" shape-rendering="auto"/><rect x="547" y="374" width="5" height="2" fill="#00ff00"/><rect x="547" y="378" width="5" height="2" fill="#00ff00"/><rect x="990" y="6" width="16" height="14" fill="#c6c6c6"/><path d="M990 6h15v1h-14v12h-1z" fill="#fff"/><path d="M1005 6h1v14h-16v-1h15z" fill="#000"/><path d="M1004 7h1v12h-14v-1h13z" fill="#808080"/><rect x="1006" y="6" width="16" height="14" fill="#c6c6c6"/><path d="M1006 6h15v1h-14v12h-1z" fill="#fff"/><path d="M1021 6h1v14h-16v-1h15z" fill="#000"/><path d="M1020 7h1v12h-14v-1h13z" fill="#808080"/><rect x="1024" y="6" width="16" height="14" fill="#c6c6c6"/><path d="M1024 6h15v1h-14v12h-1z" fill="#fff"/><path d="M1039 6h1v14h-16v-1h15z" fill="#000"/><path d="M1038 7h1v12h-14v-1h13z" fill="#808080"/><rect x="994" y="15" width="6" height="2" fill="#000"/><rect x="1009" y="8" width="9" height="9" fill="none" stroke="#000" transform="translate(.5,.5)"/><rect x="1009" y="8" width="10" height="2" fill="#000"/><path d="M1028 9l7 6.5M1035 9l-7 6.5" stroke="#000" stroke-width="1.4" shape-rendering="auto"/><g transform="translate(6,5)"><rect x="0" y="0" width="16" height="16" fill="#b0b8f0"/><rect x="2" y="2" width="12" height="12" fill="#fff"/><rect x="3" y="3" width="4" height="4" fill="#4a5ad8"/><path d="M5 7v4h4" stroke="#3040c0" fill="none"/><path d="M11 3v6" stroke="#3040c0" stroke-dasharray="1 1"/><path d="M11 9l2 2l-2 2l-2-2z" fill="none" stroke="#3040c0" shape-rendering="auto"/></g></svg>
<div class="t" id="t37" style="left:24px;top:7px;transform:scaleX(1.0240);color:#fff">図面1 - Microsoft Visio</div>
</body></html>
